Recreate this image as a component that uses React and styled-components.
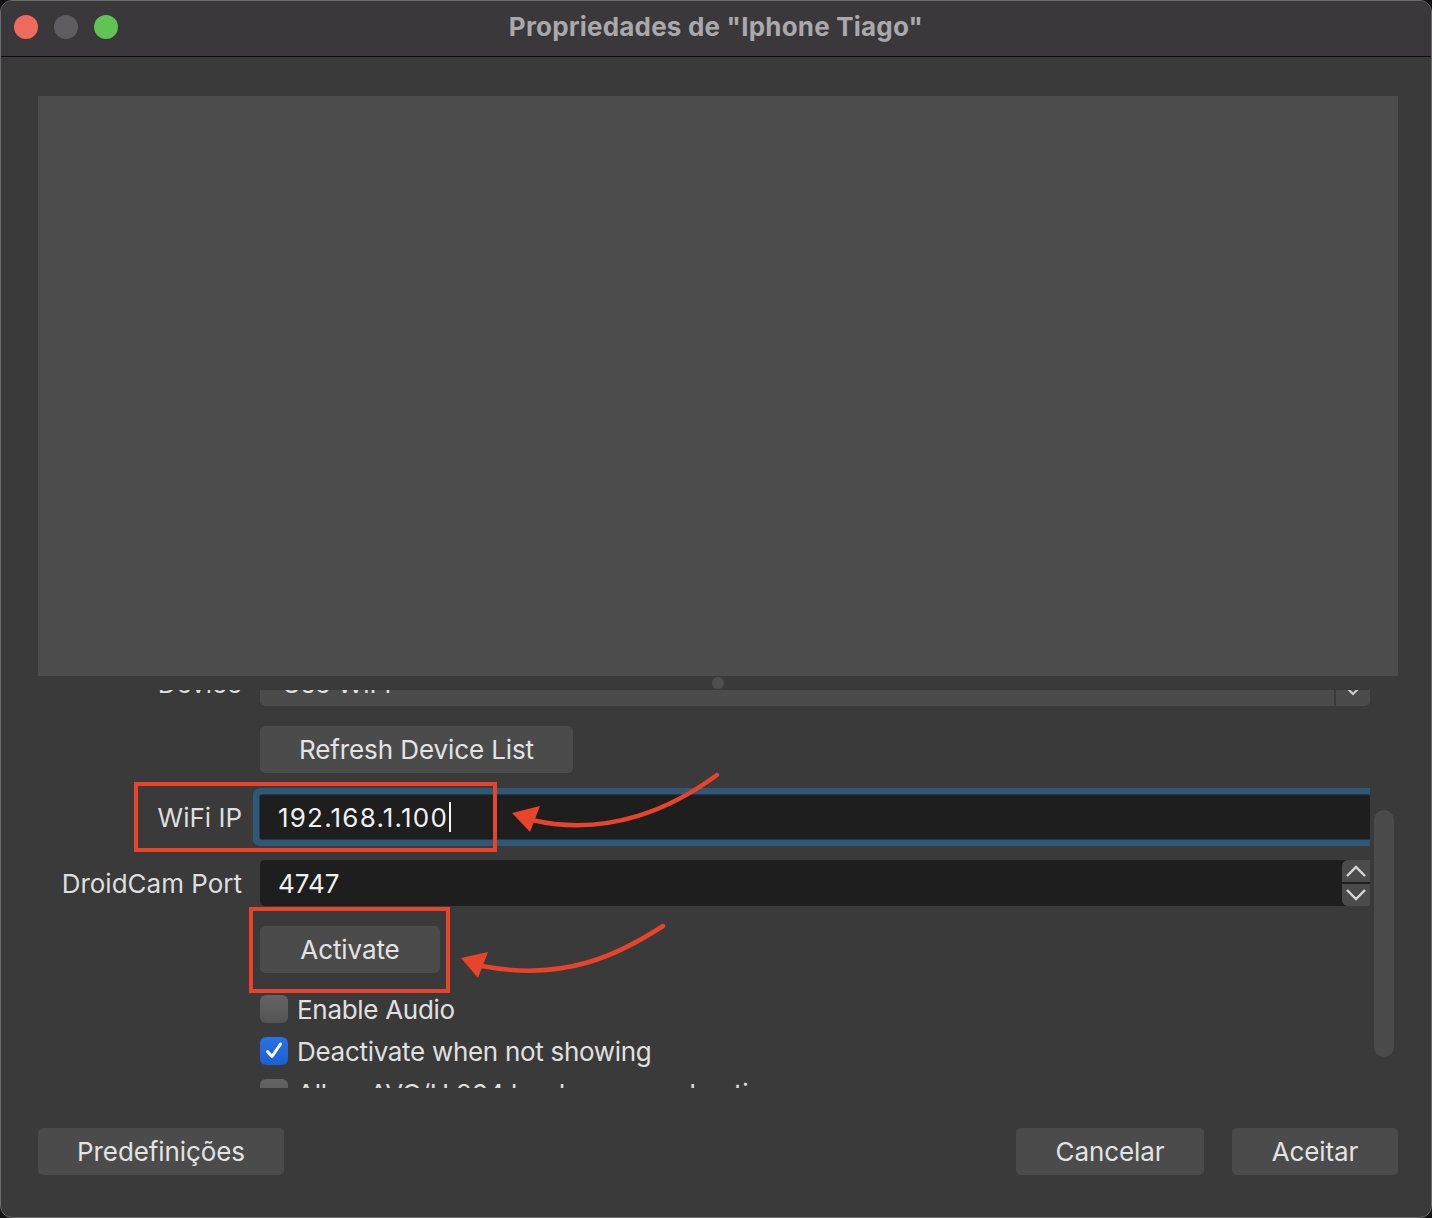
import React from "react";
import styled, { createGlobalStyle } from "styled-components";

const GlobalStyle = createGlobalStyle`
  html, body {
    margin: 0;
    padding: 0;
    background: #141414;
  }
  body {
    font-family: Inter, "Noto Sans", "Liberation Sans", sans-serif;
  }
`;

const Window = styled.div`
  position: relative;
  width: 1432px;
  height: 1218px;
  box-sizing: border-box;
  background: #3a3a3a;
  border: 1px solid #6b6b6b;
  border-radius: 12px;
  overflow: hidden;
  display: flex;
  flex-direction: column;
`;

const TitleBar = styled.div`
  height: 56px;
  box-sizing: border-box;
  padding-bottom: 4px;
  flex: none;
  background: #3a383b;
  border-bottom: 1px solid #0b0b0b;
  display: grid;
  grid-template-columns: 1fr auto 1fr;
  align-items: center;
`;

const Lights = styled.div`
  display: flex;
  gap: 16px;
  padding-left: 13px;
`;

const Light = styled.span`
  width: 24px;
  height: 24px;
  border-radius: 50%;
  background: ${(p) => p.$color};
`;

const Title = styled.div`
  font-size: 26px;
  font-weight: 700;
  color: #a9a8aa;
  letter-spacing: 0.2px;
`;

const Body = styled.div`
  flex: 1;
  display: flex;
  flex-direction: column;
  padding: 39px 33px 0 37px;
`;

const Preview = styled.div`
  height: 580px;
  background: #4c4c4c;
`;

const Splitter = styled.div`
  height: 14px;
  display: flex;
  align-items: center;
  justify-content: center;
`;

const SplitDot = styled.span`
  width: 12px;
  height: 12px;
  border-radius: 50%;
  background: #4f4f4f;
`;

const ScrollRow = styled.div`
  height: 398px;
  display: flex;
`;

const Viewport = styled.div`
  width: 1332px;
  overflow: hidden;
`;

const ScrollTrack = styled.div`
  width: 20px;
  margin-left: 4px;
  padding-top: 120px;
`;

const ScrollThumb = styled.div`
  height: 247px;
  border-radius: 10px;
  background: #4b4b4b;
`;

const Row = styled.div`
  display: grid;
  grid-template-columns: 204px 1fr;
  column-gap: 18px;
  align-items: center;
  margin-top: ${(p) => p.$mt || 0}px;
`;

const Label = styled.div`
  font-size: 26px;
  color: #dedede;
  text-align: right;
  white-space: nowrap;
`;

const Combo = styled.div`
  height: 46px;
  border-radius: 5px;
  background: #4b4b4b;
  display: flex;
  align-items: center;
  font-size: 26px;
  color: #e2e2e2;
`;

const ComboText = styled.span`
  flex: 1;
  padding-left: 22px;
`;

const ComboArrow = styled.span`
  width: 36px;
  height: 100%;
  box-sizing: border-box;
  padding-top: 26px;
  border-left: 2px solid #3a3a3a;
  display: flex;
  justify-content: center;
`;

const Button = styled.button`
  width: ${(p) => p.$w}px;
  height: 47px;
  border: none;
  border-radius: 5px;
  background: #4b4b4b;
  color: #e3e3e3;
  font-family: inherit;
  font-size: 26px;
  letter-spacing: -0.1px;
  padding: 0;
  cursor: pointer;
`;

const Input = styled.div`
  height: ${(p) => p.$h}px;
  box-sizing: border-box;
  background: #1e1e1e;
  border-radius: ${(p) => (p.$focus ? 2 : 5)}px;
  box-shadow: ${(p) =>
    p.$focus ? "0 0 0 1px #22394a, 0 0 0 7px #2f5876" : "none"};
  display: flex;
  align-items: center;
  font-size: 26px;
  color: #f0f0f0;
`;

const InputText = styled.span`
  flex: 1;
  padding-left: 18px;
  display: flex;
  align-items: center;
  letter-spacing: ${(p) => (p.$wide ? 1.2 : 0)}px;
`;

const Caret = styled.span`
  width: 2px;
  height: 30px;
  margin-left: 1px;
  background: #f4f4f4;
`;

const Spinner = styled.div`
  width: 28px;
  height: 100%;
  display: flex;
  flex-direction: column;
  gap: 2px;
  background: #1e1e1e;
`;

const SpinButton = styled.div`
  flex: 1;
  background: #4b4b4b;
  border-radius: ${(p) => (p.$up ? "6px 0 0 0" : "0 0 0 6px")};
  display: flex;
  align-items: center;
  justify-content: center;
`;

const Check = styled.div`
  display: flex;
  align-items: center;
  gap: 9px;
  font-size: 26px;
  letter-spacing: -0.3px;
  color: #e0e0e0;
  white-space: nowrap;
  height: 28px;
`;

const Box = styled.span`
  width: 28px;
  height: 28px;
  box-sizing: border-box;
  border-radius: 6px;
  flex: none;
  display: flex;
  align-items: center;
  justify-content: center;
  background: ${(p) =>
    p.$on
      ? "linear-gradient(#2a72e6, #1a5fd4)"
      : "linear-gradient(#646464, #545454)"};
`;

const Footer = styled.div`
  margin-top: 40px;
  display: flex;
  align-items: center;
`;

const Spacer = styled.div`
  flex: 1;
`;

const FooterGap = styled.div`
  width: 28px;
`;

const Overlay = styled.svg`
  position: absolute;
  left: -1px;
  top: -1px;
  pointer-events: none;
`;

const Chevron = ({ up }) => (
  <svg width="22" height="14" viewBox="0 0 22 14">
    <path
      d={up ? "M2 12 L11 3 L20 12" : "M2 2 L11 11 L20 2"}
      fill="none"
      stroke="#d6d6d6"
      strokeWidth="2.4"
    />
  </svg>
);

const Tick = () => (
  <svg width="20" height="20" viewBox="0 0 20 20">
    <path
      d="M3.5 10.5 L8 15.5 L16.5 3"
      fill="none"
      stroke="#fff"
      strokeWidth="3"
      strokeLinecap="round"
      strokeLinejoin="round"
    />
  </svg>
);

const RED = "#e8432b";

function App() {
  return (
    <>
      <GlobalStyle />
      <Window>
        <TitleBar>
          <Lights>
            <Light $color="#ee6a5f" />
            <Light $color="#5e5c60" />
            <Light $color="#5fc454" />
          </Lights>
          <Title>Propriedades de "Iphone Tiago"</Title>
          <div />
        </TitleBar>
        <Body>
          <Preview />
          <Splitter>
            <SplitDot />
          </Splitter>
          <ScrollRow>
            <Viewport>
              <Row $mt={-30}>
                <Label>Device</Label>
                <Combo>
                  <ComboText>Use WiFi</ComboText>
                  <ComboArrow>
                    <svg width="16" height="10" viewBox="0 0 16 10">
                      <path d="M2 2 L8 8 L14 2" fill="none" stroke="#cfcfcf" strokeWidth="2" />
                    </svg>
                  </ComboArrow>
                </Combo>
              </Row>
              <Row $mt={20}>
                <div />
                <div>
                  <Button $w={313}>Refresh Device List</Button>
                </div>
              </Row>
              <Row $mt={22}>
                <Label>WiFi IP</Label>
                <Input $h={44} $focus>
                  <InputText $wide>
                    192.168.1.100
                    <Caret />
                  </InputText>
                </Input>
              </Row>
              <Row $mt={21}>
                <Label>DroidCam Port</Label>
                <Input $h={46}>
                  <InputText>4747</InputText>
                  <Spinner>
                    <SpinButton $up>
                      <Chevron up />
                    </SpinButton>
                    <SpinButton>
                      <Chevron />
                    </SpinButton>
                  </Spinner>
                </Input>
              </Row>
              <Row $mt={20}>
                <div />
                <div>
                  <Button $w={180}>Activate</Button>
                </div>
              </Row>
              <Row $mt={22}>
                <div />
                <Check>
                  <Box />
                  Enable Audio
                </Check>
              </Row>
              <Row $mt={14}>
                <div />
                <Check>
                  <Box $on>
                    <Tick />
                  </Box>
                  Deactivate when not showing
                </Check>
              </Row>
              <Row $mt={14}>
                <div />
                <Check>
                  <Box />
                  Allow AVC/H.264 hardware acceleration
                </Check>
              </Row>
            </Viewport>
            <ScrollTrack>
              <ScrollThumb />
            </ScrollTrack>
          </ScrollRow>
          <Footer>
            <Button $w={246}>Predefinições</Button>
            <Spacer />
            <Button $w={188}>Cancelar</Button>
            <FooterGap />
            <Button $w={166}>Aceitar</Button>
          </Footer>
        </Body>

        <Overlay width="1432" height="1218" viewBox="0 0 1432 1218">
          <rect x="136" y="784" width="359" height="66" fill="none" stroke={RED} strokeWidth="4" />
          <rect x="251" y="909" width="197" height="82" fill="none" stroke={RED} strokeWidth="4" />
          <path d="M717 775 C 675 806, 610 838, 532 820" fill="none" stroke={RED} strokeWidth="4.5" strokeLinecap="round" />
          <polygon points="512,813 540,806 530,832" fill={RED} />
          <path d="M663 926 C 620 954, 565 982, 482 966" fill="none" stroke={RED} strokeWidth="4.5" strokeLinecap="round" />
          <polygon points="461,958 488,952 478,978" fill={RED} />
        </Overlay>
      </Window>
    </>
  );
}

export default App;
